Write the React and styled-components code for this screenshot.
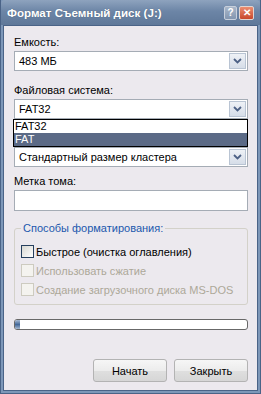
import React from 'react';
import styled, { createGlobalStyle } from 'styled-components';

const GlobalStyle = createGlobalStyle`
  html, body {
    margin: 0;
    padding: 0;
    background: #ece9ee;
  }
  * { box-sizing: border-box; }
`;

const Window = styled.div`
  width: 261px;
  height: 394px;
  display: flex;
  flex-direction: column;
  background: #4a6387;
  padding: 0 1px 1px 1px;
  font-family: "Liberation Sans", Arial, sans-serif;
  font-size: 11px;
  color: #000;
`;

const Frame = styled.div`
  flex: 1;
  display: flex;
  flex-direction: column;
  background: #7d97b8;
  padding: 0 2px 2px 2px;
`;

const TitleBar = styled.div`
  height: 25px;
  margin: 0 -2px;
  display: flex;
  align-items: center;
  padding: 0 6px 0 6px;
  background: linear-gradient(#8ea3be 0%, #6c85a6 45%, #5f7899 100%);
  border-radius: 4px 4px 0 0;
`;

const Title = styled.span`
  flex: 1;
  color: #fff;
  font-weight: bold;
  font-size: 11.6px;
  text-shadow: 0 0 1px rgba(0, 0, 0, 0.3);
`;

const CaptionButton = styled.div`
  width: ${p => (p.close ? '15px' : '13px')};
  height: 14px;
  margin-left: 2px;
  border-radius: 2px;
  border: 1px solid ${p => (p.close ? '#e0d4d0' : '#c8d0dc')};
  background: ${p => (p.close ? 'linear-gradient(#eb8d70, #c8472c)' : 'linear-gradient(#a9b7c9, #8396b0)')};
  display: flex;
  align-items: center;
  justify-content: center;
  color: #fff;
  font-weight: bold;
  font-size: 10px;
  line-height: 1;
`;

const Body = styled.div`
  flex: 1;
  background: #ece9ee;
  border: 1px solid #4a6387;
  display: flex;
  flex-direction: column;
  padding: 9px 9px 0 10px;
`;

// a label row; "covered" keeps the row's space while the open list lies over it
const Label = styled.div`
  height: 14px;
  line-height: 14px;
  margin-bottom: 2px;
  visibility: ${p => (p.covered ? 'hidden' : 'visible')};
`;

const Field = styled.div`
  position: relative;
  margin-bottom: ${p => p.gap ?? 12}px;
`;

const Combo = styled.div`
  height: 20px;
  background: #fff;
  border: 1px solid #a5acb5;
  display: flex;
  align-items: center;
  padding: 0 1px 0 4px;
`;

const ComboText = styled.span`
  flex: 1;
`;

const ArrowBox = styled.div`
  width: 17px;
  height: 16px;
  border: 1px solid #b9c4d3;
  background: linear-gradient(#eef1f6, #d6dde8);
  display: flex;
  align-items: center;
  justify-content: center;
`;

const DropList = styled.div`
  position: absolute;
  left: -1px;
  right: 0;
  top: 20px;
  background: #fff;
  border: 1px solid #000;
  z-index: 2;
`;

const Option = styled.div`
  height: 13px;
  line-height: 13px;
  padding-left: 1px;
  background: ${p => (p.selected ? '#5b6a86' : '#fff')};
  color: ${p => (p.selected ? '#fff' : '#000')};
`;

const TextBox = styled.div`
  height: 21px;
  background: #fff;
  border: 1px solid #a5acb5;
`;

const Group = styled.fieldset`
  margin: 10px 0 0 0;
  padding: 7px 8px 5px 6px;
  border: 1px solid #d3d1c9;
  border-radius: 3px;
  min-width: 0;
`;

const Legend = styled.legend`
  color: #2158ad;
  padding: 0 2px;
  margin-left: 0;
  height: 14px;
  line-height: 14px;
`;

const CheckRow = styled.div`
  display: flex;
  align-items: center;
  height: 19px;
  white-space: nowrap;
  color: ${p => (p.disabled ? '#aca899' : '#000')};
`;

const CheckBox = styled.span`
  flex: none;
  width: 13px;
  height: 13px;
  margin-right: 2px;
  border: 1px solid ${p => (p.disabled ? '#cdcbc0' : '#26405e')};
  background: ${p => (p.disabled ? '#f4f3ef' : 'linear-gradient(135deg, #d8d8d2, #ffffff)')};
`;

const Progress = styled.div`
  margin-top: 14px;
  height: 11px;
  border: 1px solid #686868;
  border-radius: 3px;
  background: #fff;
  overflow: hidden;
`;

const ProgressFill = styled.div`
  height: 100%;
  background: linear-gradient(#a6b9d2, #44699a, #a6b9d2);
`;

const ButtonRow = styled.div`
  margin-top: auto;
  margin-bottom: 8px;
  display: flex;
  justify-content: flex-end;
  gap: 7px;
`;

const Button = styled.button`
  width: 74px;
  height: 23px;
  font-family: inherit;
  font-size: 11px;
  color: #000;
  border: 1px solid #b3b3b3;
  border-radius: 3px;
  background: linear-gradient(#f6f6f6 0%, #ececec 50%, #dfdfdf 51%, #d6d6d6 100%);
  padding: 0;
`;

const Chevron = () => (
  <svg width="9" height="6" viewBox="0 0 9 6">
    <path d="M1 1 L4.5 4.5 L8 1" fill="none" stroke="#4d6185" strokeWidth="1.8" />
  </svg>
);

const ComboBox = ({ value }) => (
  <Combo>
    <ComboText>{value}</ComboText>
    <ArrowBox><Chevron /></ArrowBox>
  </Combo>
);

export default function App() {
  return (
    <>
      <GlobalStyle />
      <Window>
        <Frame>
          <TitleBar>
            <Title>Формат Съемный диск (J:)</Title>
            <CaptionButton>?</CaptionButton>
            <CaptionButton close>✕</CaptionButton>
          </TitleBar>
          <Body>
            <Label>Емкость:</Label>
            <Field><ComboBox value="483 МБ" /></Field>

            <Label>Файловая система:</Label>
            <Field>
              <ComboBox value="FAT32" />
              <DropList>
                <Option>FAT32</Option>
                <Option selected>FAT</Option>
              </DropList>
            </Field>

            <Label covered>Размер кластера:</Label>
            <Field gap={7}><ComboBox value="Стандартный размер кластера" /></Field>

            <Label>Метка тома:</Label>
            <Field gap={0}><TextBox /></Field>

            <Group>
              <Legend>Способы форматирования:</Legend>
              <CheckRow><CheckBox />Быстрое (очистка оглавления)</CheckRow>
              <CheckRow disabled><CheckBox disabled />Использовать сжатие</CheckRow>
              <CheckRow disabled><CheckBox disabled />Создание загрузочного диска MS-DOS</CheckRow>
            </Group>

            <Progress><ProgressFill style={{ width: '2%' }} /></Progress>

            <ButtonRow>
              <Button>Начать</Button>
              <Button>Закрыть</Button>
            </ButtonRow>
          </Body>
        </Frame>
      </Window>
    </>
  );
}
